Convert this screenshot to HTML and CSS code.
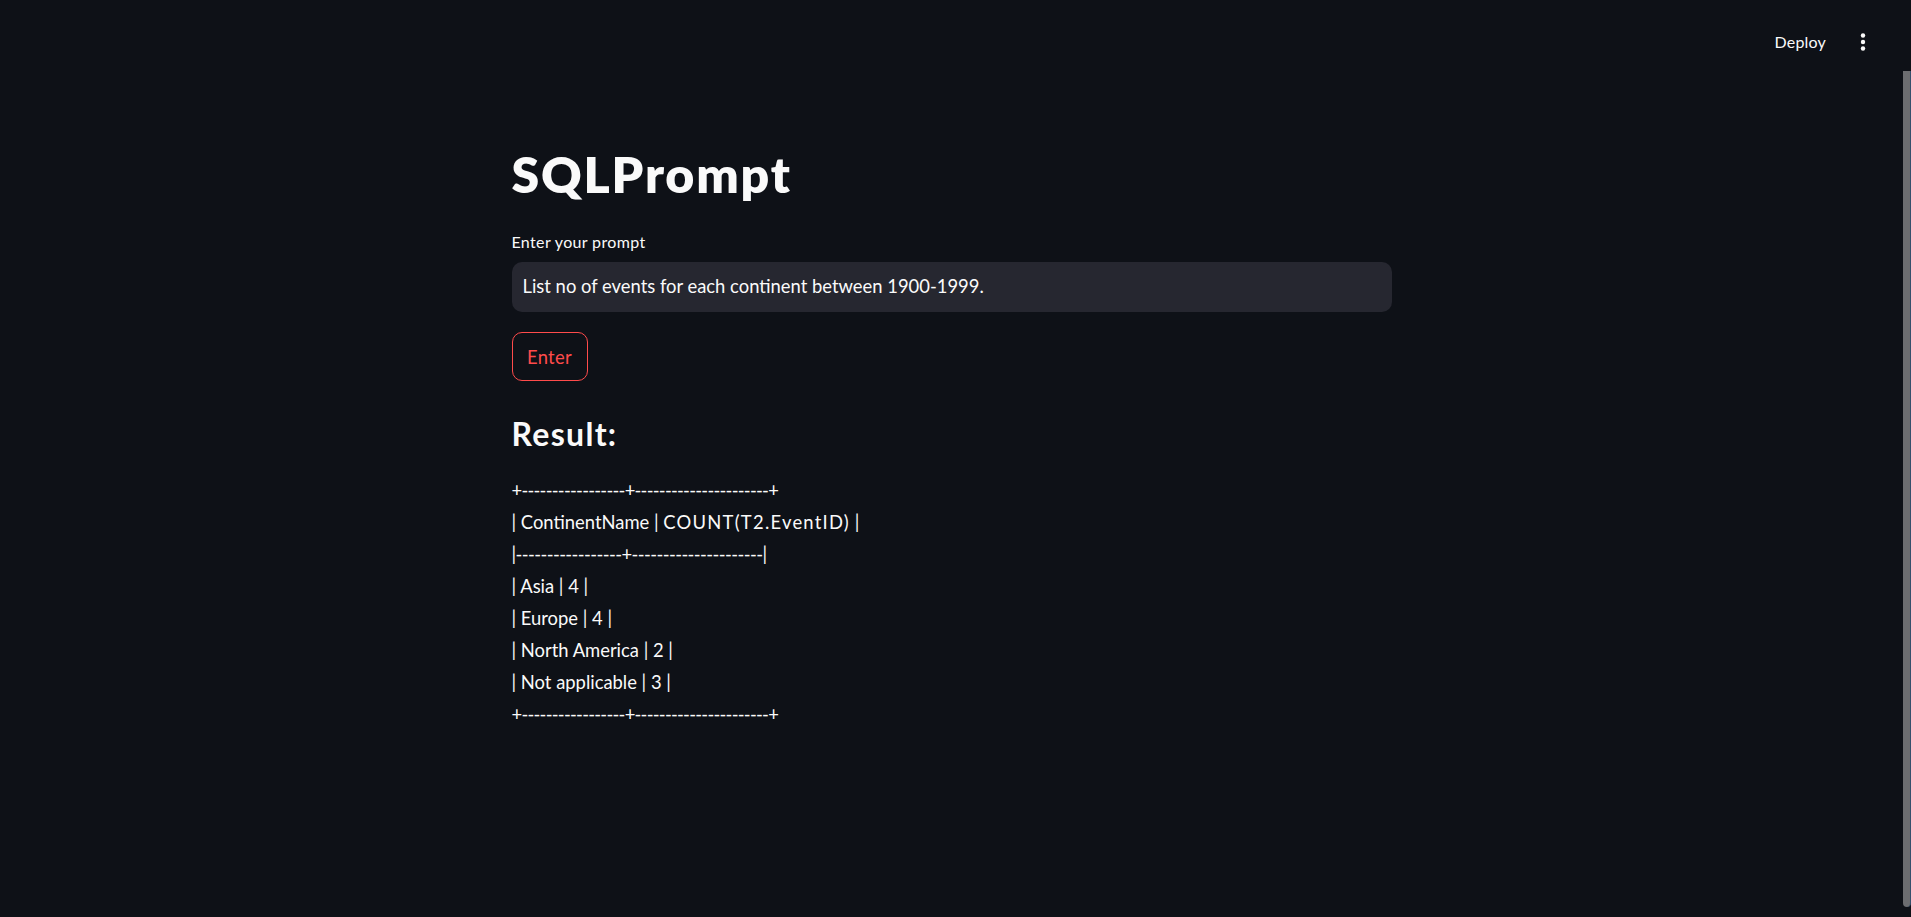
FILE: index.html
```html
<!DOCTYPE html>
<html lang="en">
<head>
<meta charset="utf-8">
<title>SQLPrompt</title>
<link rel="stylesheet" href="styles.css">
</head>
<body>
<div class="app">
  <div class="view">
    <header class="topbar">
      <span class="deploy">Deploy</span>
      <svg class="kebab" width="20" height="20" viewBox="0 0 20 20" aria-hidden="true">
        <circle cx="10" cy="3.5" r="2.2" fill="#fafafa"/>
        <circle cx="10" cy="10" r="2.2" fill="#fafafa"/>
        <circle cx="10" cy="16.5" r="2.2" fill="#fafafa"/>
      </svg>
    </header>
    <main class="block">
      <h1 class="title">SQLPrompt</h1>
      <label class="label">Enter your prompt</label>
      <div class="input">List no of events for each continent between 1900-1999.</div>
      <div class="btn-row"><button class="btn">Enter</button></div>
      <h3 class="result">Result:</h3>
      <p class="table"><span class="rule">+-----------------+----------------------+</span><br>| ContinentName | <span class="caps">COUNT(T2.EventID)</span> |<br><span class="rule mid">|-----------------+---------------------|</span><br>| Asia | 4 |<br>| Europe | 4 |<br>| North America | 2 |<br>| Not applicable | 3 |<br><span class="rule">+-----------------+----------------------+</span></p>
    </main>
  </div>
  <div class="track"><div class="thumb"></div></div>
</div>
</body>
</html>
```
FILE: styles.css
```css
html, body {
  margin: 0;
  padding: 0;
  background: #0e1117;
  height: 100%;
  overflow: hidden;
}
body {
  font-family: Lato, "Liberation Sans", sans-serif;
  color: #fafafa;
}
.app {
  display: flex;
  height: 917px;
}
.view {
  flex: 1;
  display: flex;
  flex-direction: column;
}
.topbar {
  height: 83px;
  display: flex;
  justify-content: flex-end;
  align-items: center;
  padding-right: 30px;
  gap: 27px;
}
.deploy {
  font-size: 16px;
  line-height: 20px;
  color: #fafafa;
  letter-spacing: 0.2px;
}
.kebab {
  display: block;
}
.block {
  width: 880px;
  margin: 0 auto;
  padding-top: 58px;
  display: flex;
  flex-direction: column;
}
.title {
  margin: 0 0 25px 0;
  font-size: 50px;
  line-height: 66px;
  font-weight: 800;
  letter-spacing: 1.8px;
}
.label {
  font-size: 16px;
  line-height: 20px;
  height: 20px;
  margin-bottom: 10px;
  letter-spacing: 0.35px;
}
.input {
  box-sizing: border-box;
  height: 50px;
  background: #262730;
  border-radius: 10px;
  padding: 13px 10px 0 11px;
  font-size: 18.4px;
  line-height: 22px;
}
.btn-row {
  display: flex;
  margin-top: 20px;
}
.btn {
  box-sizing: border-box;
  height: 49px;
  width: 76px;
  background: #0e1117;
  border: 1px solid #ff4b4b;
  border-radius: 10px;
  color: #ff4b4b;
  font-family: Lato, "Liberation Sans", sans-serif;
  font-size: 18.4px;
  line-height: 22px;
  letter-spacing: 0.3px;
  padding: 0;
  display: flex;
  align-items: center;
  justify-content: center;
}
.result {
  margin: 33px 0 0 0;
  font-size: 32px;
  line-height: 40px;
  font-weight: 700;
  letter-spacing: 1.3px;
}
.table {
  margin: 20px 0 0 0;
  font-size: 18.4px;
  line-height: 32px;
}
.rule {
  letter-spacing: -0.76px;
}
.rule.mid {
  letter-spacing: -0.6px;
}
.caps {
  letter-spacing: 1.25px;
}
.track {
  width: 8px;
  display: flex;
  flex-direction: column;
}
.thumb {
  margin-top: 71px;
  height: 836px;
  background: #6c6d70;
  border-right: 1px solid #35506c;
  border-radius: 0 0 4px 4px;
}
```
